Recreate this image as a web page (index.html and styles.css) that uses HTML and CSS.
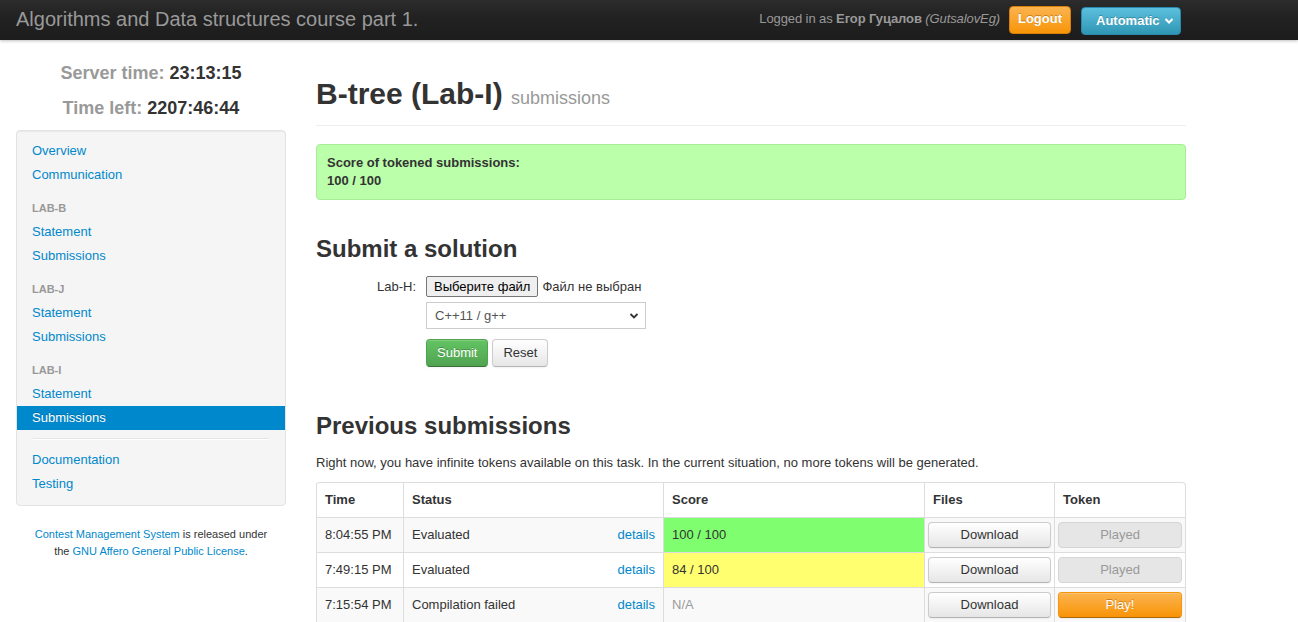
FILE: index.html
```html
<!DOCTYPE html>
<html>
<head>
<meta charset="utf-8">
<title>B-tree (Lab-I) submissions</title>
<link rel="stylesheet" href="styles.css">
</head>
<body>
<div class="navbar">
  <div class="brand">Algorithms and Data structures course part 1.</div>
  <div class="nav-right">
    <span class="login">Logged in as <b>Егор Гуцалов</b> <i>(GutsalovEg)</i></span>
    <button class="btn-logout">Logout</button>
    <button class="btn-auto">Automatic <svg width="10" height="8" viewBox="0 0 10 8"><path d="M1.5 2 L5 5.5 L8.5 2" fill="none" stroke="#fff" stroke-width="2"/></svg></button>
  </div>
</div>
<div class="container">
  <div class="sidebar">
    <div class="clock"><span class="lbl">Server time:</span> 23:13:15</div>
    <div class="clock"><span class="lbl">Time left:</span> 2207:46:44</div>
    <div class="well">
      <ul class="nav-list">
        <li><a href="#">Overview</a></li>
        <li><a href="#">Communication</a></li>
        <li class="nav-header">Lab-B</li>
        <li><a href="#">Statement</a></li>
        <li><a href="#">Submissions</a></li>
        <li class="nav-header">Lab-J</li>
        <li><a href="#">Statement</a></li>
        <li><a href="#">Submissions</a></li>
        <li class="nav-header">Lab-I</li>
        <li><a href="#">Statement</a></li>
        <li class="active"><a href="#">Submissions</a></li>
        <li class="divider"></li>
        <li><a href="#">Documentation</a></li>
        <li><a href="#">Testing</a></li>
      </ul>
    </div>
    <div class="footer"><a href="#">Contest Management System</a> is released under the <a href="#">GNU Affero General Public License</a>.</div>
  </div>
  <div class="main">
    <div class="page-header">
      <h1>B-tree (Lab-I) <small>submissions</small></h1>
    </div>
    <div class="alert">
      <b>Score of tokened submissions:</b><br>
      <b>100 / 100</b>
    </div>
    <h2>Submit a solution</h2>
    <form class="form">
      <div class="row">
        <label class="flabel">Lab-H:</label>
        <div class="controls">
          <div class="file"><span class="file-btn">Выберите файл</span> Файл не выбран</div>
          <div class="select">C++11 / g++ <svg width="10" height="8" viewBox="0 0 10 8"><path d="M1.5 2 L5 5.5 L8.5 2" fill="none" stroke="#333" stroke-width="1.8"/></svg></div>
          <div class="actions">
            <span class="btn btn-success">Submit</span>
            <span class="btn">Reset</span>
          </div>
        </div>
      </div>
    </form>
    <h2 class="h2-prev">Previous submissions</h2>
    <p class="info">Right now, you have infinite tokens available on this task. In the current situation, no more tokens will be generated.</p>
    <table class="table">
      <thead>
        <tr><th class="c-time">Time</th><th class="c-status">Status</th><th class="c-score">Score</th><th class="c-files">Files</th><th class="c-token">Token</th></tr>
      </thead>
      <tbody>
        <tr class="odd">
          <td>8:04:55 PM</td>
          <td><div class="status"><span>Evaluated</span><a href="#">details</a></div></td>
          <td class="score-full">100 / 100</td>
          <td class="bcell"><span class="btn btn-block">Download</span></td>
          <td class="bcell"><span class="btn btn-block disabled">Played</span></td>
        </tr>
        <tr>
          <td>7:49:15 PM</td>
          <td><div class="status"><span>Evaluated</span><a href="#">details</a></div></td>
          <td class="score-part">84 / 100</td>
          <td class="bcell"><span class="btn btn-block">Download</span></td>
          <td class="bcell"><span class="btn btn-block disabled">Played</span></td>
        </tr>
        <tr class="odd">
          <td>7:15:54 PM</td>
          <td><div class="status"><span>Compilation failed</span><a href="#">details</a></div></td>
          <td class="na">N/A</td>
          <td class="bcell"><span class="btn btn-block">Download</span></td>
          <td class="bcell"><span class="btn btn-block btn-warning">Play!</span></td>
        </tr>
      </tbody>
    </table>
  </div>
</div>
</body>
</html>
```

FILE: styles.css
```css
* { box-sizing: border-box; }
html, body { margin: 0; padding: 0; }
body {
  font-family: "Liberation Sans", Arial, Helvetica, sans-serif;
  font-size: 13px;
  line-height: 18px;
  color: #333;
  background: #fff;
}
a { color: #0088cc; text-decoration: none; }

.navbar {
  height: 40px;
  background: linear-gradient(#2c2c2c, #222 40%, #1c1c1c);
  display: flex;
  align-items: center;
  justify-content: space-between;
  padding: 0 117px 0 16px;
  box-shadow: 0 1px 3px rgba(0,0,0,0.25);
}
.brand {
  color: #999;
  font-size: 20px;
  line-height: 20px;
  font-weight: 200;
  margin-top: -2px;
}
.nav-right { display: flex; align-items: center; }
.login { color: #999; font-size: 13px; margin-right: 9px; margin-top: -2px; letter-spacing: -0.1px; }
.login b { font-weight: bold; }
.btn-logout {
  font-family: inherit;
  font-size: 13px;
  font-weight: bold;
  color: #fff;
  height: 28px;
  width: 62px;
  padding: 0;
  border: 1px solid #d87f0a;
  border-radius: 4px;
  background: linear-gradient(#fbb450, #f89406);
  text-shadow: 0 -1px 0 rgba(0,0,0,0.25);
  margin-top: -1px;
  line-height: 24px;
  padding-bottom: 3px;
}
.btn-auto {
  font-family: inherit;
  font-size: 13px;
  font-weight: bold;
  color: #fff;
  height: 28px;
  width: 100px;
  margin-left: 10px;
  padding: 0 6px 0 14px;
  border: 1px solid #2a8aae;
  border-radius: 4px;
  background: linear-gradient(#5bc0de, #2f96b4);
  display: flex;
  align-items: center;
  justify-content: space-between;
  text-shadow: 0 -1px 0 rgba(0,0,0,0.25);
  margin-top: 1px;
}

.container {
  display: flex;
  gap: 30px;
  padding-left: 16px;
}
.sidebar { width: 270px; flex: none; padding-top: 21px; }
.clock {
  text-align: center;
  font-size: 18px;
  font-weight: bold;
  line-height: 24px;
  color: #333;
  margin-bottom: 11px;
}
.clock + .clock { margin-bottom: 10px; }
.clock .lbl { color: #999; }
.well {
  background: #f5f5f5;
  border: 1px solid #e3e3e3;
  border-radius: 4px;
  box-shadow: inset 0 1px 1px rgba(0,0,0,0.05);
  padding: 8px 0 9px;
  margin-top: 0;
}
.nav-list { list-style: none; margin: 0; padding: 0 15px; }
.nav-list li a {
  display: block;
  padding: 3px 15px;
  margin: 0 -15px;
  line-height: 18px;
  font-size: 13px;
}
.nav-list .nav-header {
  text-transform: uppercase;
  font-size: 11px;
  font-weight: bold;
  color: #999;
  line-height: 18px;
  padding: 3px 0;
  margin-top: 9px;
}
.nav-list .active a {
  background: #0088cc;
  color: #fff;
  text-shadow: 0 -1px 0 rgba(0,0,0,0.2);
}
.nav-list .divider {
  margin: 8px 1px;
  background: #e5e5e5;
  border-bottom: 1px solid #fff;
  height: 1px;
  box-sizing: content-box;
}
.footer {
  text-align: center;
  font-size: 11px;
  line-height: 17px;
  padding: 20px 15px 0;
}

.main { width: 870px; flex: none; padding-top: 36px; }
.page-header {
  border-bottom: 1px solid #eee;
  padding-bottom: 9px;
  margin-bottom: 18px;
}
h1 {
  margin: 0;
  font-size: 30px;
  line-height: 36px;
  font-weight: bold;
}
h1 small { font-size: 18px; font-weight: normal; color: #999; }
.alert {
  background: #bbffaa;
  border: 1px solid #a8eb98;
  border-radius: 4px;
  padding: 9px 10px;
  line-height: 18px;
  margin-bottom: 34px;
}
h2 {
  margin: 0;
  font-size: 24px;
  line-height: 30px;
  font-weight: bold;
}
.form { margin-top: 12px; }
.row { display: flex; }
.flabel { width: 100px; text-align: right; padding-top: 2px; color: #333; }
.controls { margin-left: 10px; }
.file { display: flex; align-items: center; font-size: 13px; }
.file-btn {
  display: inline-block;
  height: 21px;
  line-height: 19px;
  padding: 0 7px;
  border: 1px solid #767676;
  border-radius: 2px;
  background: #efefef;
  color: #000;
  margin-right: 4px;
}
.select {
  margin-top: 5px;
  width: 220px;
  height: 27px;
  border: 1px solid #ccc;
  padding: 0 6px 0 8px;
  display: flex;
  align-items: center;
  justify-content: space-between;
  color: #555;
  background: #fff;
}
.actions { margin-top: 10px; display: flex; gap: 4px; }
.btn {
  display: inline-block;
  padding: 4px 10px;
  line-height: 18px;
  font-size: 13px;
  color: #333;
  text-align: center;
  border: 1px solid #ccc;
  border-bottom-color: #b3b3b3;
  border-radius: 4px;
  background: linear-gradient(#ffffff, #e6e6e6);
  box-shadow: inset 0 1px 0 rgba(255,255,255,0.2), 0 1px 2px rgba(0,0,0,0.05);
}
.btn-success {
  color: #fff;
  background: linear-gradient(#62c462, #51a351);
  border-color: #51a351 #51a351 #387038;
  text-shadow: 0 -1px 0 rgba(0,0,0,0.25);
}
.actions .btn { height: 28px; }
.h2-prev { margin-top: 44px; }
.info { margin: 13px 0 10px; }
.table {
  width: 870px;
  border-collapse: separate;
  border-spacing: 0;
  border: 1px solid #ddd;
  border-left: none;
  border-radius: 4px 4px 0 0;
  table-layout: fixed;
}
.table th, .table td {
  border-left: 1px solid #ddd;
  border-top: 1px solid #ddd;
  padding: 8px;
  text-align: left;
  vertical-align: middle;
  height: 35px;
}
.table thead th { border-top: none; font-weight: bold; height: 34px; }
.table tr.odd td { background: #f9f9f9; }
.c-time { width: 87px; }
.c-status { width: 260px; }
.c-score { width: 261px; }
.c-files { width: 130px; }
.c-token { width: 131px; }
.status { display: flex; justify-content: space-between; }
.table tr td.score-full { background: #7fff6f; }
.table tr td.score-part { background: #ffff70; }
.na { color: #999; }
.table td.bcell { padding: 3px 3px; }
.btn-block { display: block; width: 100%; padding: 3px 10px; }
.btn.disabled {
  color: #999;
  background: #e6e6e6;
  box-shadow: none;
  border-color: #d5d5d5;
}
.btn-warning {
  color: #fff;
  background: linear-gradient(#fbb450, #f89406);
  border-color: #f89406 #f89406 #ad6704;
  text-shadow: 0 -1px 0 rgba(0,0,0,0.25);
}
```
